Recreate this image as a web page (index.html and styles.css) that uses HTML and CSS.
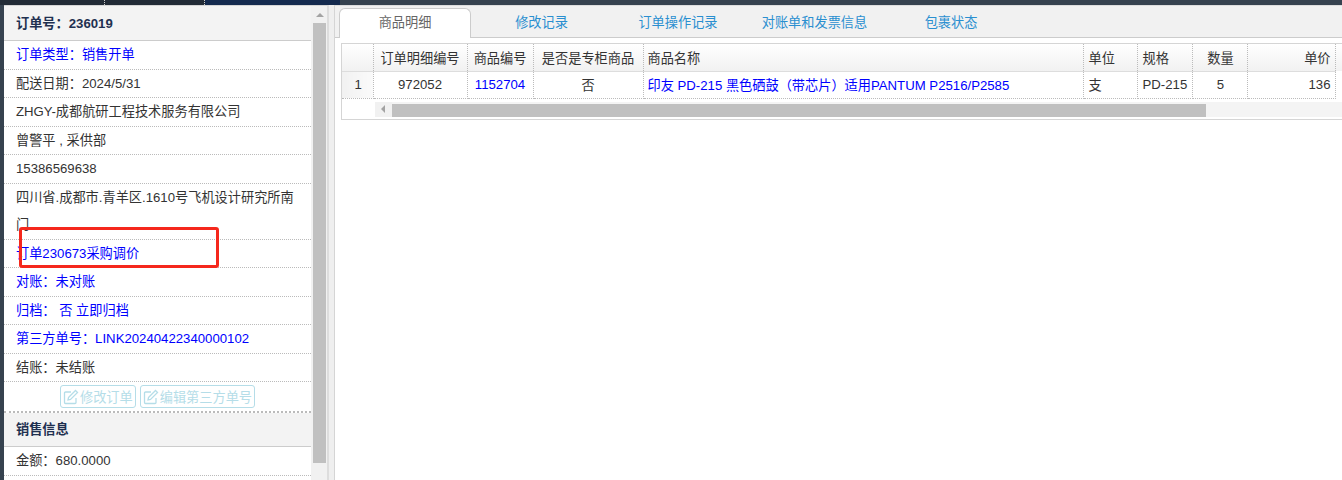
FILE: index.html
```html
<!DOCTYPE html>
<html lang="zh-CN">
<head>
    <meta charset="UTF-8">
    <title>订单详情</title>
    <link rel="stylesheet" href="styles.css">
</head>
<body>
    <div class="topbar">
        <div class="topbar-seg first"></div>
        <div class="topbar-seg"></div>
        <div class="topbar-navy"></div>
    </div>
    <div class="page">
        <aside class="side">
            <div class="side-inner">
                <div class="side-title">订单号：236019</div>
                <div class="row blue">订单类型：销售开单</div>
                <div class="row">配送日期：2024/5/31</div>
                <div class="row">ZHGY-成都航研工程技术服务有限公司</div>
                <div class="row">曾警平 , 采供部</div>
                <div class="row">15386569638</div>
                <div class="row">四川省.成都市.青羊区.1610号飞机设计研究所南门</div>
                <div class="row blue">订单230673采购调价</div>
                <div class="row blue">对账：未对账</div>
                <div class="row blue">归档：&nbsp;否 立即归档</div>
                <div class="row blue">第三方单号：LINK20240422340000102</div>
                <div class="row">结账：未结账</div>
                <div class="row-btns">
                    <span class="btn">
                        <svg class="btn-icon" viewBox="0 0 16 16"><path d="M13 9v4.5a1 1 0 0 1-1 1H2.5a1 1 0 0 1-1-1V4a1 1 0 0 1 1-1H8"/><path d="M5.5 8.5l7-7 2 2-7 7-2.5.5z"/></svg>修改订单
                    </span>
                    <span class="btn">
                        <svg class="btn-icon" viewBox="0 0 16 16"><path d="M13 9v4.5a1 1 0 0 1-1 1H2.5a1 1 0 0 1-1-1V4a1 1 0 0 1 1-1H8"/><path d="M5.5 8.5l7-7 2 2-7 7-2.5.5z"/></svg>编辑第三方单号
                    </span>
                </div>
                <div class="side-title sub">销售信息</div>
                <div class="row">金额：680.0000</div>
            </div>
            <div class="vscroll">
                <div class="arrow-up"></div>
                <div class="vthumb"></div>
            </div>
        </aside>
        <div class="splitter"></div>
        <main class="main">
            <div class="tabs">
                <div class="tab active">商品明细</div>
                <div class="tab">修改记录</div>
                <div class="tab">订单操作记录</div>
                <div class="tab">对账单和发票信息</div>
                <div class="tab">包裹状态</div>
            </div>
            <div class="grid-box">
                <table class="grid">
                    <colgroup>
                        <col class="c-no"><col class="c-detail"><col class="c-code"><col class="c-flag"><col class="c-name"><col class="c-unit"><col class="c-spec"><col class="c-qty"><col class="c-price">
                    </colgroup>
                    <thead>
                        <tr>
                            <th></th>
                            <th>订单明细编号</th>
                            <th>商品编号</th>
                            <th>是否是专柜商品</th>
                            <th class="left">商品名称</th>
                            <th class="left wide">单位</th>
                            <th class="left wide">规格</th>
                            <th class="qty">数量</th>
                            <th class="right">单价</th>
                        </tr>
                    </thead>
                    <tbody>
                        <tr>
                            <td class="no">1</td>
                            <td>972052</td>
                            <td class="blue">1152704</td>
                            <td>否</td>
                            <td class="left blue">印友 PD-215 黑色硒鼓（带芯片）适用PANTUM P2516/P2585</td>
                            <td class="left wide">支</td>
                            <td class="left wide">PD-215</td>
                            <td class="qty">5</td>
                            <td class="right">136</td>
                        </tr>
                    </tbody>
                </table>
                <div class="hscroll">
                    <div class="htrack">
                        <div class="hscroll-btn"><div class="arrow-left"></div></div>
                        <div class="hthumb"></div>
                    </div>
                </div>
            </div>
        </main>
    </div>
    <div class="mark"></div>
</body>
</html>
```

FILE: styles.css
```css
* {
    margin: 0;
    padding: 0;
    box-sizing: border-box;
}

html, body {
    height: 480px;
    overflow: hidden;
}

body {
    background: #fff;
    color: #333;
    font-family: "Liberation Sans", "Noto Sans CJK SC", sans-serif;
    font-size: 13.2px;
    position: relative;
}

.blue {
    color: #00f;
}

.topbar {
    display: flex;
    height: 5px;
    background: #36424f;
}

.topbar-seg {
    width: 100px;
    background: #222b36;
    border-right: 1px dotted #ccc;
}

.topbar-seg.first {
    width: 105px;
}

.topbar-navy {
    width: 135px;
    background: #142a4e;
}

.page {
    display: flex;
    height: 475px;
    background: #36424f;
    padding-left: 4px;
}

.side {
    display: flex;
    flex: none;
    width: 325px;
    height: 100%;
    background: #fff;
    border-top: 1px solid #d5d5d5;
    border-right: 2px solid #ddd;
    overflow: hidden;
}

.side-inner {
    width: 307px;
    flex: none;
}

.side-title {
    height: 35px;
    line-height: 35px;
    padding-left: 12px;
    background: #f3f3f3;
    border-bottom: 1px solid #ccc;
    font-weight: bold;
    color: #1f3050;
}

.side-title.sub {
    height: 34px;
    line-height: 34px;
}

.row {
    padding: 0 12px;
    line-height: 27.5px;
    border-bottom: 1px dotted #bbb;
}

.row-btns {
    display: flex;
    justify-content: center;
    gap: 4px;
    height: 31px;
    padding-top: 3px;
    border-bottom: 2px dotted #bbb;
}

.btn {
    display: inline-flex;
    align-items: center;
    height: 23px;
    padding: 0 2px;
    border: 1px solid #b5dde8;
    border-radius: 3px;
    color: #b5dde8;
}

.btn-icon {
    width: 16px;
    height: 16px;
    margin-right: 1px;
    fill: none;
    stroke: #b5dde8;
    stroke-width: 1.3;
}

.vscroll {
    width: 16px;
    background: #f1f1f1;
    padding: 0 1px 0 2px;
}

.arrow-up {
    width: 0;
    height: 0;
    margin: 7px auto 6px;
    border-left: 4px solid transparent;
    border-right: 4px solid transparent;
    border-bottom: 4px solid #a3a3a3;
}

.vthumb {
    height: 440px;
    background: #c0c0c0;
}

.splitter {
    flex: none;
    width: 5px;
    background: #efefef;
}

.main {
    flex: 1;
    min-width: 0;
    background: #fff;
    border-left: 1px solid #d5d5d5;
}

.tabs {
    display: flex;
    gap: 4.5px;
    height: 33px;
    padding: 2px 0 0 4px;
    background: #f1f1f1;
    border-top: 1px solid #ddd;
    border-bottom: 1px solid #ccc;
}

.tab {
    flex: none;
    width: 132px;
    height: 29px;
    line-height: 30px;
    text-align: center;
    color: #2a8fd0;
}

.tab.active {
    height: 30px;
    line-height: 28px;
    background: #fff;
    color: #666;
    border: 1px solid #ccc;
    border-bottom: none;
    border-radius: 6px 6px 0 0;
}

.grid-box {
    margin: 5px 0 0 6px;
    border: 1px solid #d5d5d5;
    border-right: none;
    background: linear-gradient(#fff, #f1f1f1) no-repeat 0 0 / 100% 27px;
}

.grid {
    border-collapse: collapse;
    table-layout: fixed;
    width: 993px;
}

.c-no { width: 31px; }
.c-detail { width: 94px; }
.c-code { width: 66px; }
.c-flag { width: 110px; }
.c-name { width: 440px; }
.c-unit { width: 54px; }
.c-spec { width: 55px; }
.c-qty { width: 55px; }
.c-price { width: 88px; }

.grid th {
    height: 27px;
    font-weight: normal;
    border-right: 1px dotted #bbb;
    border-bottom: 1px solid #ddd;
}

.grid td {
    height: 27px;
    padding-bottom: 1px;
    text-align: center;
    white-space: nowrap;
    background: #fff;
    border-right: 1px dotted #bbb;
    border-bottom: 1px dotted #bbb;
}

.grid td.no {
    padding-left: 2px;
    background: linear-gradient(to right, #f1f1f1, #fafafa);
}

.grid .left {
    text-align: left;
    padding-left: 4px;
}

.grid .left.wide {
    padding-left: 5px;
}

.grid .qty {
    padding-left: 2px;
}

.grid .right {
    text-align: right;
    padding-right: 4px;
}

.hscroll {
    height: 20px;
    padding: 3px 0 0 33px;
    background: #fff;
}

.htrack {
    display: flex;
    align-items: flex-end;
    height: 15px;
    background: #f4f4f4;
}

.hscroll-btn {
    display: flex;
    align-items: center;
    width: 17px;
    height: 15px;
    padding-left: 6px;
    background: #f1f1f1;
}

.arrow-left {
    width: 0;
    height: 0;
    border-top: 4px solid transparent;
    border-bottom: 4px solid transparent;
    border-right: 4px solid #a3a3a3;
}

.hthumb {
    width: 814px;
    height: 13px;
    background: #c0c0c0;
}

.mark {
    position: absolute;
    left: 19px;
    top: 227px;
    width: 200px;
    height: 41px;
    border: 3px solid #f5281c;
    border-radius: 3px;
}
```
